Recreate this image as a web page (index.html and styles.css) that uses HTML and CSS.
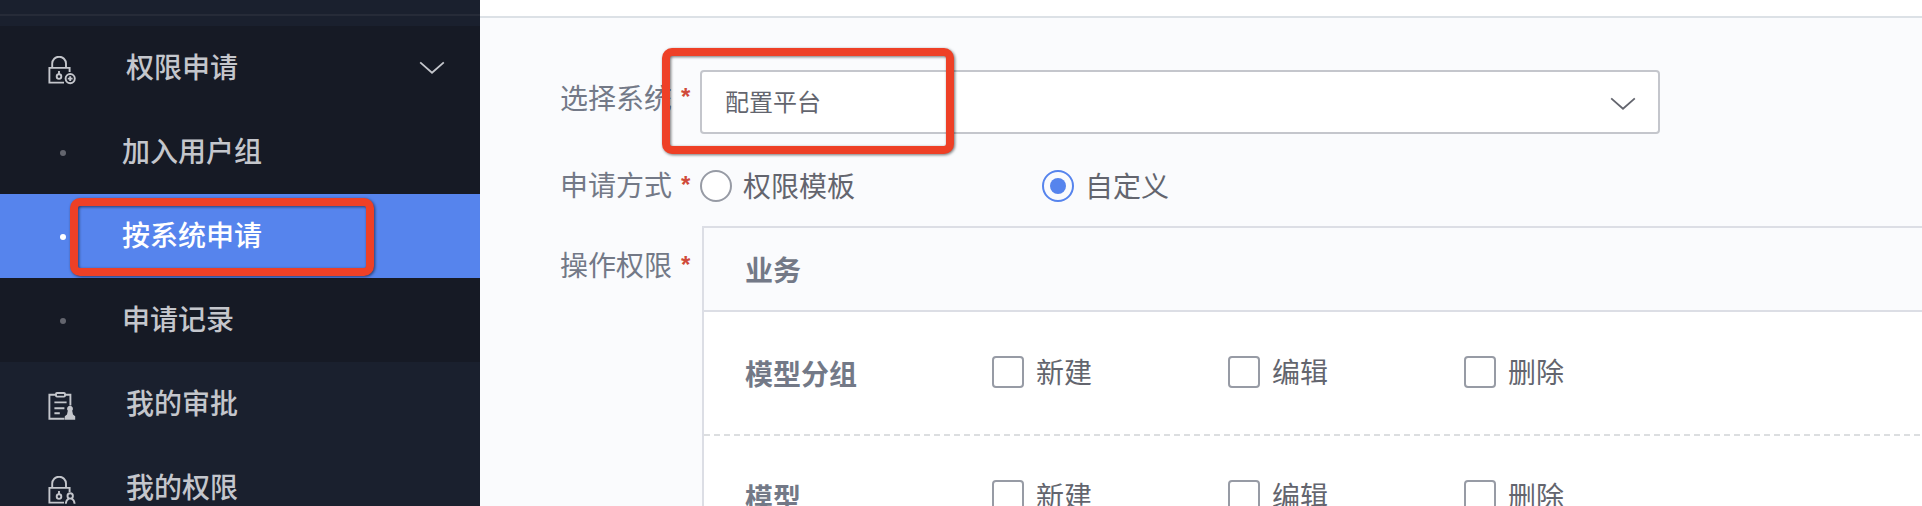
FILE: index.html
```html
<!DOCTYPE html>
<html lang="zh-CN">
<head>
<meta charset="utf-8">
<title>权限申请</title>
<link rel="stylesheet" href="styles.css">
</head>
<body>
<div class="app">
  <nav class="sidebar">
    <div class="sidebar-top"></div>
    <div class="nav-group">
      <div class="nav-item">
        <svg class="nav-icon" viewBox="0 0 30 30"><path d="M5.2 11V7.6a6.9 6.9 0 0 1 13.8 0V11M22.6 16V11.9H2.4v14.7H17"/><circle cx="12" cy="20.6" r="2.3"/><path d="M12 15v3.3"/><circle cx="23.2" cy="22.6" r="4.6"/><path d="M23.2 20.2v4.8M20.8 22.6h4.8"/></svg>
        <span class="nav-text">权限申请</span>
        <svg class="chevron" viewBox="0 0 26 14"><path d="M1.2 1.4 13 11.8 24.8 1.4"/></svg>
      </div>
      <div class="nav-item sub"><i class="dot"></i><span class="nav-text">加入用户组</span></div>
      <div class="nav-item sub active"><i class="dot"></i><span class="nav-text">按系统申请</span><div class="mark mark-nav"></div></div>
      <div class="nav-item sub"><i class="dot"></i><span class="nav-text">申请记录</span></div>
    </div>
    <div class="nav-item">
      <svg class="nav-icon" viewBox="0 0 30 30"><path d="M9 2.8H2.4v24H17.5M18 2.8h5.4V13.5"/><rect x="9" y="1" width="9" height="3.6" rx="1"/><path d="M7.4 10.4h12.2M7.4 16.2h10M7.4 21.3h5.4"/><path class="solid" d="M23 13.8a3 3 0 0 1 2.2 5l.8 3.8 2.2 1.6v3.6H17.8v-3.6l2.2-1.6.8-3.8a3 3 0 0 1 2.2-5z"/></svg>
      <span class="nav-text">我的审批</span>
    </div>
    <div class="nav-item">
      <svg class="nav-icon" viewBox="0 0 30 30"><path d="M5.2 11V7.6a6.9 6.9 0 0 1 13.8 0V11M22.6 16V11.9H2.4v14.7H17"/><circle cx="12" cy="20.6" r="2.3"/><path d="M12 15v3.3"/><circle cx="23.2" cy="19.9" r="2.7"/><path d="M18.8 27.8c.2-2.6 1.3-4.4 3-5.2M27.6 27.8c-.2-2.6-1.3-4.4-3-5.2"/></svg>
      <span class="nav-text">我的权限</span>
    </div>
  </nav>
  <main class="main">
    <div class="header"></div>
    <div class="form">
      <div class="row row-system">
        <label class="label">选择系统</label><b class="star">*</b>
        <div class="select"><span class="select-text">配置平台</span><svg class="chevron" viewBox="0 0 26 14"><path d="M1.2 1.4 13 11.8 24.8 1.4"/></svg><div class="mark mark-select"></div></div>
      </div>
      <div class="row row-mode">
        <label class="label">申请方式</label><b class="star">*</b>
        <div class="radios">
          <span class="radio"><i class="circle"></i><span class="opt">权限模板</span></span>
          <span class="radio checked"><i class="circle"></i><span class="opt">自定义</span></span>
        </div>
      </div>
      <div class="row row-actions">
        <label class="label">操作权限</label><b class="star">*</b>
        <div class="table">
          <div class="table-head"><span class="title">业务</span></div>
          <div class="table-row">
            <span class="title">模型分组</span>
            <span class="check"><i class="box"></i><span class="opt">新建</span></span>
            <span class="check"><i class="box"></i><span class="opt">编辑</span></span>
            <span class="check"><i class="box"></i><span class="opt">删除</span></span>
          </div>
          <div class="table-row">
            <span class="title">模型</span>
            <span class="check"><i class="box"></i><span class="opt">新建</span></span>
            <span class="check"><i class="box"></i><span class="opt">编辑</span></span>
            <span class="check"><i class="box"></i><span class="opt">删除</span></span>
          </div>
        </div>
      </div>
    </div>
  </main>
</div>
</body>
</html>
```
FILE: styles.css
```css
* { box-sizing: border-box; }
body {
  margin: 0;
  height: 506px;
  overflow: hidden;
  font: 28px/40px "Noto Sans CJK SC", sans-serif;
  color: #63656e;
}
svg { display: block; fill: none; stroke: currentColor; stroke-width: 2; flex: none; }
.app { display: flex; height: 506px; overflow: hidden; }

.sidebar { width: 480px; flex: none; background: #1a202e; color: #c4c6cc; }
.sidebar-top { height: 26px; padding-top: 14px; }
.sidebar-top::before { content: ""; display: block; height: 2px; background: #262b38; }
.nav-group { background: #161a25; }
.nav-item { position: relative; display: flex; align-items: center; height: 84px; padding: 0 35px 0 47px; }
.nav-icon { width: 30px; height: 30px; margin: 6px 49px 0 0; stroke-width: 1.9; }
.nav-icon .solid { fill: currentColor; stroke: none; }
.nav-text { flex: 1; padding-bottom: 4px; font-weight: 500; }
.chevron { width: 26px; height: 14px; stroke-width: 1.8; }
.sub { padding-left: 60px; }
.dot { width: 6px; height: 6px; margin: 2px 56px 0 0; border-radius: 50%; background: #63656e; }
.active { background: #5684ed; color: #fff; }
.active .dot { background: #fff; }

.mark { position: absolute; border: 8px solid #ee4026; border-radius: 10px; filter: drop-shadow(1px 1px 1.5px rgba(0, 0, 0, .55)); }
.mark-nav { left: 70px; top: 4px; width: 304px; height: 78px; }
.mark-select { left: -40px; top: -24px; width: 292px; height: 106px; }

.main { flex: 1; min-width: 0; background: #fafbfd; }
.header { height: 18px; background: #fff; border-bottom: 2px solid #dce1e6; }
.form { padding: 52px 0 0 80px; }
.row { display: flex; align-items: flex-start; }
.label { width: 121px; color: #737987; }
.star { width: 19px; font: 700 24px/24px "Liberation Sans", sans-serif; color: #d04a3a; }
.row-system .label { margin-top: 7px; }
.row-system .star { margin-top: 15px; }
.select { position: relative; display: flex; align-items: center; justify-content: space-between; width: 960px; height: 64px; padding: 0 22px 0 23px; border: 2px solid #c4c6cc; border-radius: 4px; background: #fff; font-size: 24px; }
.select-text { padding-bottom: 3px; }
.select .chevron { margin-top: 4px; }
.row-mode { margin-top: 36px; height: 32px; }
.row-mode .label { margin-top: -6px; }
.row-mode .star { margin-top: 3px; }
.radios { display: flex; height: 32px; }
.radio { display: flex; align-items: center; width: 342px; }
.circle { width: 32px; height: 32px; margin-right: 11px; border: 2px solid #979ba5; border-radius: 50%; background: #fff; }
.checked .circle { padding: 6px; border-color: #5684ed; background: #5684ed content-box; }
.opt { padding-bottom: 3px; }
.row-actions { margin-top: 24px; }
.row-actions .label { margin-top: 18px; }
.row-actions .star { margin-top: 27px; width: 21px; }
.table { flex: 1; border: 2px solid #dcdee5; border-right: 0; background: #fff; }
.table-head { display: flex; align-items: center; height: 84px; padding-left: 41px; border-bottom: 2px solid #dcdee5; background: #fafbfd; }
.title { width: 247px; font-weight: 700; color: #737987; }
.table-row { display: flex; align-items: center; height: 124px; padding: 0 0 2px 41px; background: repeating-linear-gradient(90deg, #dcdee0 0 6px, transparent 6px 10px) bottom / 100% 2px no-repeat; }
.check { display: flex; align-items: center; width: 236px; margin-top: -2px; }
.box { width: 32px; height: 32px; margin-right: 12px; border: 2px solid #979ba5; border-radius: 4px; background: #fff; }
```
